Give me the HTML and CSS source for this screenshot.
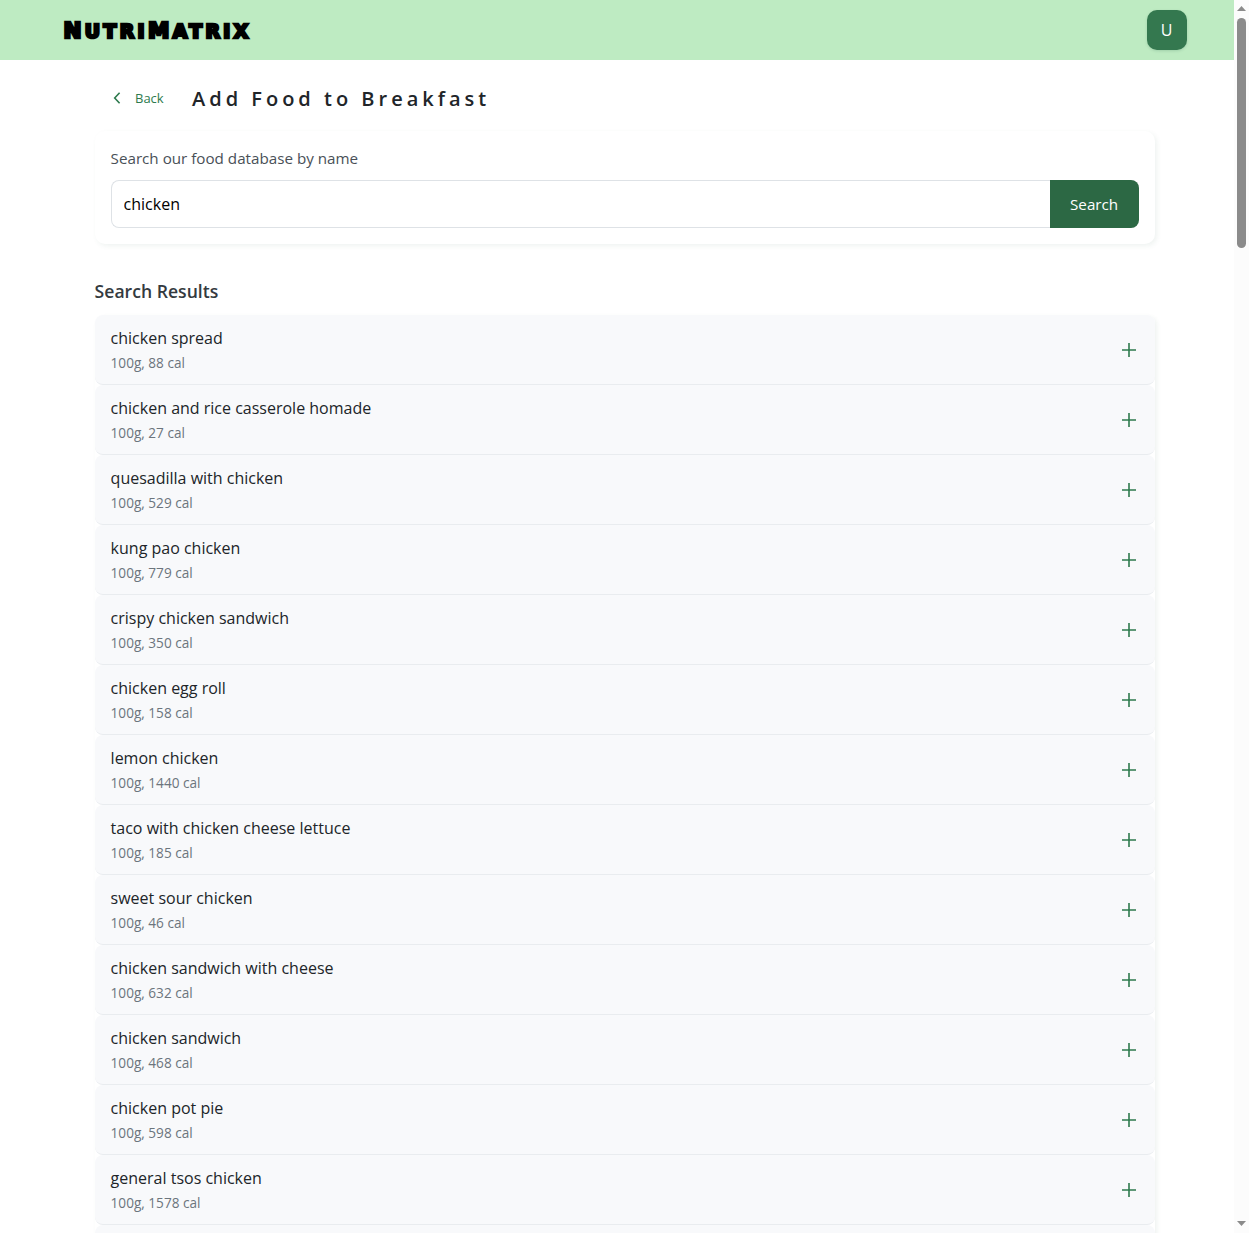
FILE: index.html
```html
<!DOCTYPE html>
<html lang="en">
<head>
<meta charset="utf-8">
<title>NutriMatrix</title>
<link rel="stylesheet" href="styles.css">
</head>
<body>
<div class="viewport">
  <div class="page">
    <header class="navbar">
      <div class="logo">N<span class="logo-small">utri</span>M<span class="logo-small">atrix</span></div>
      <button class="avatar">U</button>
    </header>
    <main class="content">
      <div class="heading">
        <a class="back"><svg width="8" height="12" viewBox="0 0 8 12"><path d="M6.6 .8 1.7 6l4.9 5.2" fill="none" stroke="currentColor" stroke-width="1.6"/></svg><span>Back</span></a>
        <h1 class="title">Add Food to Breakfast</h1>
      </div>
      <section class="search-card">
        <label class="search-label" for="food">Search our food database by name</label>
        <div class="search-row">
          <input class="search-input" id="food" type="text" value="chicken">
          <button class="search-button">Search</button>
        </div>
      </section>
      <h2 class="results-title">Search Results</h2>
      <ul class="results" id="results"></ul>
    </main>
  </div>
  <div class="scrollbar">
    <svg class="arrow" width="9" height="5" viewBox="0 0 9 5"><path d="M0 5 4.5 0 9 5z" fill="#8b8b8b"/></svg>
    <div class="thumb"></div>
    <svg class="arrow arrow-down" width="9" height="5" viewBox="0 0 9 5"><path d="M0 0 4.5 5 9 0z" fill="#8b8b8b"/></svg>
  </div>
</div>
<script src="app.js"></script>
</body>
</html>
```

FILE: styles.css
```css
* { box-sizing: border-box; }
body { margin: 0; font-family: "Open Sans", sans-serif; color: #212529; background: #fff; overflow: hidden; }
button, input { font: inherit; margin: 0; }
.viewport { display: flex; height: 1233px; overflow: hidden; }
.page { flex: 1; overflow: hidden; }
.navbar { height: 60px; background: #beebc2; display: flex; align-items: center; justify-content: space-between; padding: 0 47px 0 63.4px; }
.logo { font-family: "DejaVu Sans", sans-serif; font-size: 21.5px; font-weight: 700; letter-spacing: 3.4px; color: #000; -webkit-text-stroke: 2.7px #000; line-height: 30px; padding-top: 3px; }
.logo-small { font-size: 18.8px; text-transform: uppercase; }
.avatar { width: 40px; height: 40px; border: 0; border-radius: 10px; background: #34784f; color: #fff; font-size: 16px; padding: 0 1px 0 0; box-shadow: 0 1px 3px rgba(45, 106, 79, .2); }
.content { width: 1060px; margin-left: 94.6px; }
.heading { display: flex; align-items: center; height: 71px; padding: 7px 0 0 18.4px; }
.back { display: flex; align-items: center; gap: 14px; color: #2d7a4d; font-size: 13px; line-height: 20px; width: 79px; padding-bottom: 2px; }
.title { margin: 0; font-size: 20px; line-height: 28px; font-weight: 600; letter-spacing: 4px; white-space: nowrap; }
.search-card { height: 113px; padding: 16px; border-radius: 10px; box-shadow: 2px 2px 5px rgba(45, 106, 79, .08); }
.search-label { display: block; font-size: 15.2px; line-height: 22px; color: #495057; }
.search-row { display: flex; height: 48px; margin-top: 11px; }
.search-input { flex: 1; min-width: 0; border: 1px solid #dee2e6; border-right: 0; border-radius: 8px 0 0 8px; padding: 0 12px; font-size: 16px; color: #000; background: #fff; outline: 0; }
.search-button { width: 89px; border: 0; border-radius: 0 8px 8px 0; background: #2c6844; color: #fff; font-size: 15.2px; padding: 0; }
.results-title { margin: 34px 0 10px; font-size: 17.6px; line-height: 27px; font-weight: 600; color: #343a40; }
.results { list-style: none; margin: 0; padding: 0; border-radius: 8px; box-shadow: 2px 2px 4px rgba(45, 106, 79, .08); }
.result { display: flex; align-items: center; justify-content: space-between; height: 70px; padding: 0 19px 0 16px; background: #f8f9fb; border-bottom: 1px solid #e9ecef; border-radius: 8px; }
.food-name { font-size: 16px; line-height: 26px; }
.food-info { font-size: 13.6px; line-height: 24px; color: #6c757d; }
.add { color: #2d7a4d; }
.scrollbar { width: 15px; background: #fcfcfc; display: flex; flex-direction: column; align-items: center; padding: 6px 0 7px; }
.thumb { width: 9px; height: 230px; margin-top: 7px; border-radius: 5px; background: #8b8b8b; }
.arrow-down { margin-top: auto; }
```

FILE: app.js
```javascript
const foods = [
  ["chicken spread", 88], ["chicken and rice casserole homade", 27],
  ["quesadilla with chicken", 529], ["kung pao chicken", 779],
  ["crispy chicken sandwich", 350], ["chicken egg roll", 158],
  ["lemon chicken", 1440], ["taco with chicken cheese lettuce", 185],
  ["sweet sour chicken", 46], ["chicken sandwich with cheese", 632],
  ["chicken sandwich", 468], ["chicken pot pie", 598],
  ["general tsos chicken", 1578]
];
const row = content => `<li class="result">${content}</li>`;
document.getElementById("results").innerHTML = foods.map(([name, cal]) => row(
  `<div><div class="food-name">${name}</div><div class="food-info">100g, ${cal} cal</div></div>
   <svg class="add" width="14" height="14" viewBox="0 0 14 14"><path d="M7 0v14M0 7h14" stroke="currentColor" stroke-width="1.6"/></svg>`
)).join("") + row("");
```
